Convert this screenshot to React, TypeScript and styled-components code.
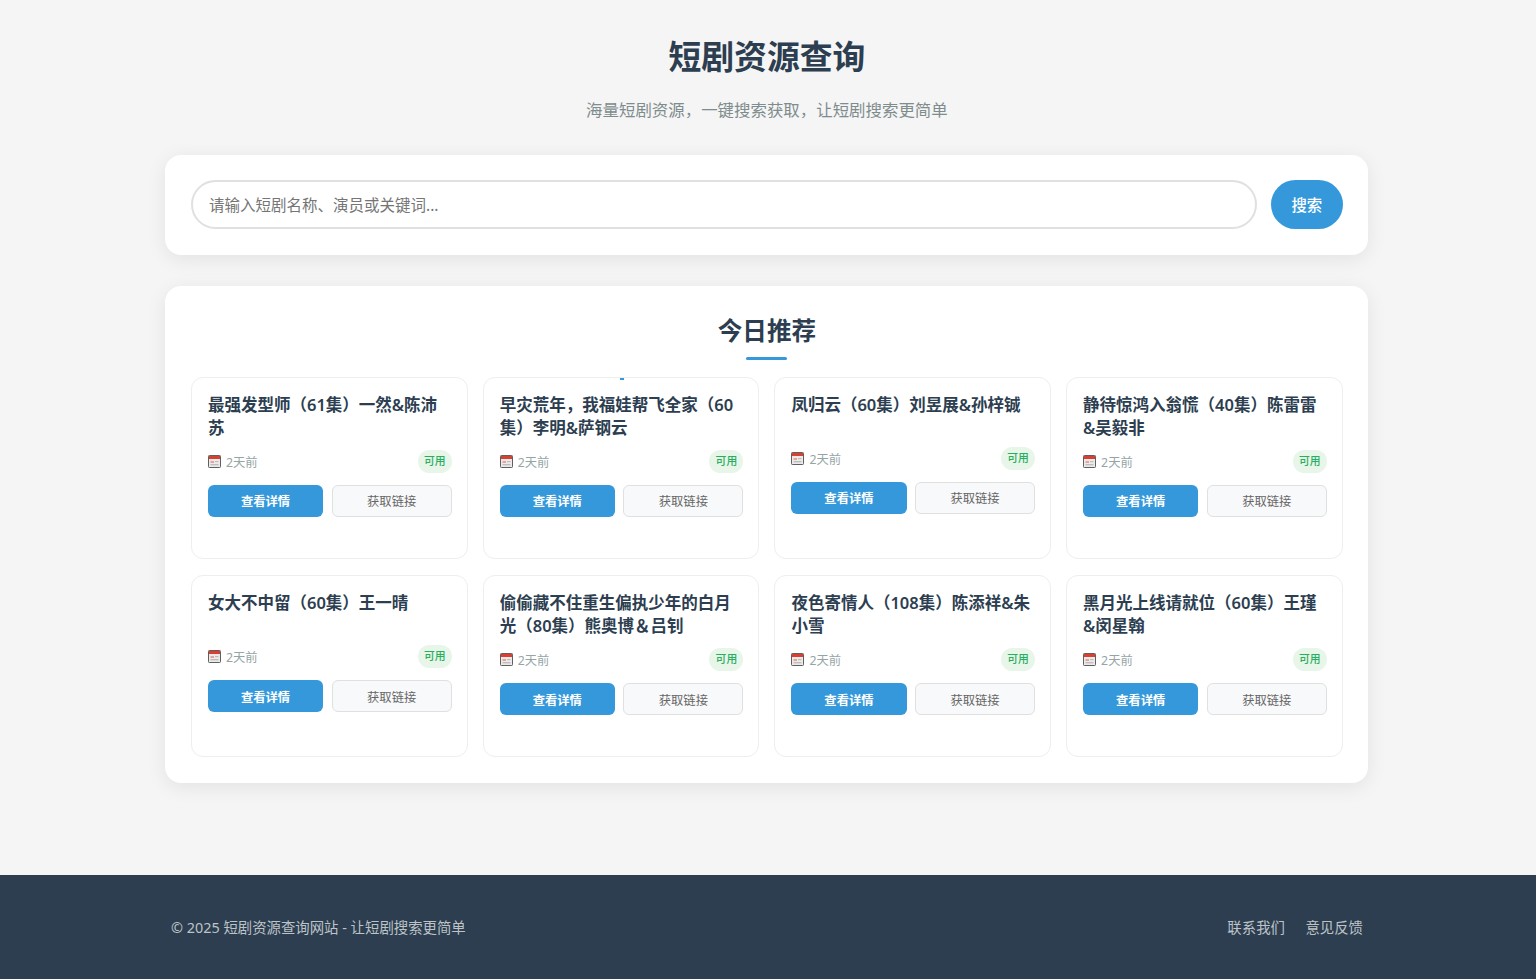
import React from "react";
import styled, { createGlobalStyle } from "styled-components";

const Global = createGlobalStyle`
  * { box-sizing: border-box; }
  html, body { margin: 0; padding: 0; background: #f5f5f5; }
  body { font-family: "Noto Sans", "Noto Sans CJK SC", sans-serif; color: #333; }
`;

const Page = styled.div`
  min-height: 979px;
  display: flex;
  flex-direction: column;
`;
const TopShade = styled.div`
  height: 0;
  box-shadow: 0 2px 10px rgba(0, 0, 0, 0.1);
`;
const Main = styled.main`
  flex: 1;
  width: 1203px;
  margin-left: 165.4px;
  padding-top: 33px;
`;
const Hero = styled.header`
  text-align: center;
  height: 122px;
`;
const Title = styled.h1`
  margin: 0;
  font-size: 32.8px;
  line-height: 48px;
  font-weight: 700;
  color: #2c3e50;
`;
const Subtitle = styled.p`
  margin: 16px 0 0;
  font-size: 16.45px;
  line-height: 25px;
  color: #7f8c8d;
`;
const Panel = styled.section`
  background: #fff;
  border-radius: 16px;
  box-shadow: 0 4px 20px rgba(0, 0, 0, 0.08);
  padding: 25.6px;
`;
const SearchPanel = styled(Panel)`
  display: flex;
  gap: 14px;
  height: 100px;
  padding-top: 25px;
  margin-bottom: 31px;
`;
const SearchInput = styled.input`
  flex: 1;
  min-width: 0;
  height: 49px;
  border: 2px solid #e0e0e0;
  border-radius: 25px;
  padding: 1px 16px 0;
  font: inherit;
  font-size: 15.5px;
  outline: none;
  &::placeholder { color: #757575; opacity: 1; }
`;
const SearchButton = styled.button`
  width: 72px;
  height: 49px;
  border: 0;
  border-radius: 25px;
  background: #3498db;
  color: #fff;
  font: inherit;
  font-size: 15.4px;
  font-weight: 500;
`;
const Heading = styled.h2`
  position: relative;
  margin: 0 0 17px;
  height: 48px;
  padding-top: 1px;
  text-align: center;
  font-size: 24.6px;
  line-height: 36px;
  font-weight: 700;
  color: #2c3e50;
  &::after {
    content: "";
    position: absolute;
    left: 50%;
    bottom: 0;
    width: 41px;
    height: 3px;
    margin-left: -20.5px;
    border-radius: 2px;
    background: #3498db;
  }
`;
const Grid = styled.div`
  display: grid;
  grid-template-columns: repeat(4, 1fr);
  gap: 16.4px 15px;
`;
const Card = styled.article<{ $marked?: boolean }>`
  position: relative;
  height: 182px;
  border: 1px solid #eee;
  border-radius: 12px;
  padding: 15px 15px 16px 16px;
  background: #fff;
  ${(p) =>
    p.$marked &&
    `&::before {
      content: "";
      position: absolute;
      left: 136px;
      top: 0;
      width: 4px;
      height: 2px;
      background: #3498db;
    }`}
`;
const CardTitle = styled.h3`
  margin: 0 0 11px;
  min-height: 43px;
  font-size: 16.5px;
  line-height: 23px;
  font-weight: 600;
  color: #2c3e50;
`;
const Meta = styled.div`
  display: flex;
  align-items: center;
  justify-content: space-between;
  height: 23px;
  margin-bottom: 12px;
`;
const DateText = styled.span`
  display: flex;
  align-items: center;
  gap: 5px;
  font-size: 12.3px;
  color: #95a5a6;
  padding-top: 1px;
`;
const Badge = styled.span`
  width: 34px;
  height: 23px;
  border-radius: 12px;
  background: #e8f5e9;
  color: #27ae60;
  font-size: 10.8px;
  font-weight: 500;
  line-height: 21px;
  text-align: center;
`;
const Actions = styled.div`
  display: flex;
  gap: 8.5px;
`;
const PrimaryAction = styled.button`
  flex: 116 1 0;
  height: 32px;
  border: 0;
  border-radius: 6px;
  padding: 1.5px 0 0;
  background: #3498db;
  color: #fff;
  font: inherit;
  font-size: 12.3px;
  font-weight: 600;
`;
const SecondaryAction = styled.button`
  flex: 119 1 0;
  height: 32px;
  border: 1px solid #e0e0e0;
  border-radius: 6px;
  padding: 1.5px 0 0;
  background: #f8f9fa;
  color: #666;
  font: inherit;
  font-size: 12.3px;
`;
const Footer = styled.footer`
  height: 104px;
  background: #2c3e50;
  color: #bdc3c7;
  font-size: 14.4px;
`;
const FooterInner = styled.div`
  width: 1192px;
  height: 100%;
  margin-left: 171px;
  padding-bottom: 2px;
  display: flex;
  align-items: center;
  justify-content: space-between;
`;
const FooterLinks = styled.nav`
  display: flex;
  gap: 20.5px;
`;
const FooterLink = styled.a`
  color: #bdc3c7;
  text-decoration: none;
`;

const CalendarIcon = () => (
  <svg width="13" height="13" viewBox="0 0 13 13" aria-hidden="true">
    <rect x="0.5" y="0.5" width="12" height="12" rx="0.8" fill="#eeeaea" stroke="#5f5f5f" />
    <rect x="1" y="1" width="11" height="3" fill="#d9402f" />
    <rect x="2.5" y="6" width="3.5" height="2" fill="#e3a69c" />
    <rect x="7" y="6" width="3.5" height="1.2" fill="#bdbdbd" />
    <rect x="2.5" y="9" width="8" height="1.4" fill="#bdbdbd" />
  </svg>
);

const dramas = [
  "最强发型师（61集）一然&陈沛苏",
  "早灾荒年，我福娃帮飞全家（60集）李明&萨钢云",
  "凤归云（60集）刘昱展&孙梓铖",
  "静待惊鸿入翁慌（40集）陈雷雷&吴毅非",
  "女大不中留（60集）王一晴",
  "偷偷藏不住重生偏执少年的白月光（80集）熊奥博＆吕钊",
  "夜色寄情人（108集）陈添祥&朱小雪",
  "黑月光上线请就位（60集）王瑾&闵星翰",
];

export default function App() {
  return (
    <Page>
      <Global />
      <TopShade />
      <Main>
        <Hero>
          <Title>短剧资源查询</Title>
          <Subtitle>海量短剧资源，一键搜索获取，让短剧搜索更简单</Subtitle>
        </Hero>
        <SearchPanel>
          <SearchInput placeholder="请输入短剧名称、演员或关键词..." />
          <SearchButton>搜索</SearchButton>
        </SearchPanel>
        <Panel>
          <Heading>今日推荐</Heading>
          <Grid>
            {dramas.map((name, i) => (
              <Card key={name} $marked={i === 1}>
                <CardTitle>{name}</CardTitle>
                <Meta>
                  <DateText>
                    <CalendarIcon />
                    2天前
                  </DateText>
                  <Badge>可用</Badge>
                </Meta>
                <Actions>
                  <PrimaryAction>查看详情</PrimaryAction>
                  <SecondaryAction>获取链接</SecondaryAction>
                </Actions>
              </Card>
            ))}
          </Grid>
        </Panel>
      </Main>
      <Footer>
        <FooterInner>
          <span>© 2025 短剧资源查询网站 - 让短剧搜索更简单</span>
          <FooterLinks>
            <FooterLink href="#">联系我们</FooterLink>
            <FooterLink href="#">意见反馈</FooterLink>
          </FooterLinks>
        </FooterInner>
      </Footer>
    </Page>
  );
}
